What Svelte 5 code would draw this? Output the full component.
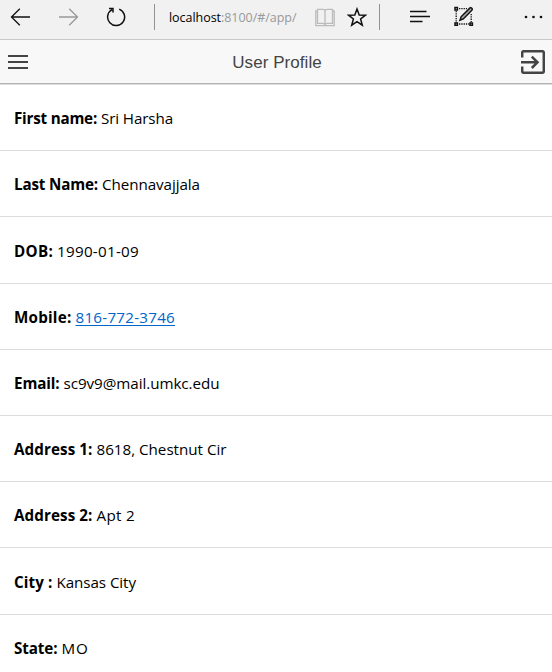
<script>
  const fields = [
    { label: 'First name:', labelWidth: 83, value: 'Sri Harsha', width: 72 },
    { label: 'Last Name:', labelWidth: 84, value: 'Chennavajjala', width: 98 },
    { label: 'DOB:', labelWidth: 39, value: '1990-01-09', width: 82 },
    { label: 'Mobile:', labelWidth: 57.5, value: '816-772-3746', width: 99.5, link: true },
    { label: 'Email:', labelWidth: 45.5, value: 'sc9v9@mail.umkc.edu', width: 156 },
    { label: 'Address 1:', labelWidth: 78.5, value: '8618, Chestnut Cir', width: 130 },
    { label: 'Address 2:', labelWidth: 78.5, value: 'Apt 2', width: 38.5 },
    { label: 'City :', labelWidth: 38.5, value: 'Kansas City', width: 79.5 },
    { label: 'State:', labelWidth: 43.5, value: 'MO', width: 27 }
  ];

  // Tracks the text so that it fills the given width.
  function fit(node, width) {
    const natural = node.getBoundingClientRect().width;
    node.style.letterSpacing = `${(width - natural) / node.textContent.length}px`;
  }
</script>

<div class="screen">
  <div class="browser">
    <svg class="back" width="20" height="20" viewBox="0 0 20 20"><path d="M1.5 10H20M9.8 1.7L1.5 10l8.3 8.3" /></svg>
    <svg class="forward" width="20" height="20" viewBox="0 0 20 20"><path d="M0 10h18.5M10.2 1.7l8.3 8.3-8.3 8.3" /></svg>
    <svg class="reload" width="20" height="20" viewBox="0 0 20 20"><path d="M13.2 2.1a8.5 8.5 0 1 1-7.2.5M3 1.5h4v4" /></svg>
    <i class="divider first"></i>
    <div class="url"><span class="host" use:fit={52}>localhost</span><span class="path" use:fit={75.5}>:8100/#/app/</span></div>
    <svg class="book" width="20" height="19" viewBox="0 0 20 19">
      <path d="M2.5 3H.8v14.7h18.4V3h-1.7" />
      <path d="M2.5 1.3h5.2Q10 1.3 10 3q0-1.7 2.3-1.7h5.2v14h-5.2Q10 15.3 10 17q0-1.7-2.3-1.7H2.5zM10 3v14" />
    </svg>
    <svg class="star" width="20" height="20" viewBox="0 0 20 20"><path d="M10 2l2.2 6 6.2.2-4.8 3.8 1.7 6.2L10 14.7l-5.3 3.5L6.4 12 1.6 8.2l6.2-.2z" /></svg>
    <i class="divider second"></i>
    <svg class="hub" width="20" height="13" viewBox="0 0 20 13"><path d="M0 1.5h16.5M0 6.5h20M0 11.5h12.5" /></svg>
    <svg class="note" width="20" height="20" viewBox="0 0 20 20">
      <path class="dots" d="M5 2.7h8M5 18h11M2.2 5v12M17.2 8v8" />
      <path d="M1 1.5h2.4v2.4H1zM1 16.9h2.4v2.4H1zM16 16.9h2.4v2.4H16z" />
      <path class="pen" d="M6 14.3l1.1-3.5L15.8 2.1q1-1 2 .1t0 2L9.3 12.9z" />
    </svg>
    <svg class="more" width="20" height="4" viewBox="0 0 20 4"><circle cx="3" cy="2" r="1.35" /><circle cx="10.5" cy="2" r="1.35" /><circle cx="18" cy="2" r="1.35" /></svg>
  </div>

  <header>
    <svg width="20" height="14" viewBox="0 0 20 14"><path d="M0 1h20M0 7h20M0 13h20" /></svg>
    <h1><span use:fit={89.5}>User Profile</span></h1>
    <svg class="exit" width="24" height="24" viewBox="0 0 24 24">
      <path d="M1.2 7.5V2.7q0-1.5 1.5-1.5h18.6q1.5 0 1.5 1.5v18.6q0 1.5-1.5 1.5H2.7q-1.5 0-1.5-1.5v-4.8M0 12.3h16.5M10.8 6.6l5.7 5.7-5.7 5.7" />
    </svg>
  </header>

  <main>
    {#each fields as field}
      <div class="row">
        <b use:fit={field.labelWidth}>{field.label}</b>
        {#if field.link}
          <a href="tel:{field.value}" use:fit={field.width}>{field.value}</a>
        {:else}
          <span use:fit={field.width}>{field.value}</span>
        {/if}
      </div>
    {/each}
  </main>
</div>

<style>
  :global(body) { margin: 0; background: #fff; overflow: hidden; }
  .screen { width: 552px; height: 672px; overflow: hidden; background: #fff; color: #000; font-family: "Open Sans", "Noto Sans", sans-serif; }
  svg { display: block; flex: none; fill: none; stroke: #111; stroke-width: 1.3; }
  .browser { box-sizing: border-box; height: 40px; display: flex; align-items: center; padding: 0 9px 5px 10px; background: #f1f1f1; border-bottom: 1px solid #c8c8c8; }
  .forward { margin-left: 29px; stroke: #999; }
  .reload { margin-left: 27px; stroke-width: 1.5; }
  .divider { flex: none; width: 1px; height: 26px; background: #929292; }
  .first { margin-left: 28px; }
  .url { width: 129px; margin-left: 14px; padding-top: 2px; white-space: nowrap; font-size: 12.5px; line-height: 20px; }
  .url span { display: inline-block; }
  .path { color: #999; }
  .book { margin-left: 17px; stroke: #bbb; }
  .star { margin-left: 12px; stroke-width: 1.5; }
  .second { margin-left: 12px; }
  .hub { margin: 0 0 2px 30px; stroke-width: 1.3; }
  .note { margin: 0 0 2px 24px; stroke-width: 1.5; }
  .note .dots { stroke-dasharray: 1.3 1; stroke-width: 1.3; }
  .note .pen { fill: #aaa; stroke-width: 1.5; }
  .more { margin-left: auto; fill: #111; stroke: none; }
  header { box-sizing: border-box; height: 45px; display: flex; align-items: center; padding: 0 7px 0 8px; background: #f8f8f8; border-bottom: 1px solid #dcdcdc; box-shadow: inset 0 -1px #b2b2b2; }
  header svg { stroke: #444; stroke-width: 2; }
  header .exit { stroke-width: 2.5; }
  h1 { flex: 1; margin: 0; padding: 2px 0 0 5px; text-align: center; font: 400 17px/42px "Liberation Sans", Arial, sans-serif; color: #444; }
  h1 span { display: inline-block; }
  main { margin-top: -0.1px; }
  .row { box-sizing: border-box; height: 66.21px; display: flex; gap: 4px; padding: 21.25px 14px 0; border-bottom: 1px solid #ddd; font-size: 15.2px; line-height: 24px; white-space: nowrap; }
  .row span, .row a, .row b { flex: none; }
  a { color: #0066cc; text-decoration: underline; text-underline-offset: 2px; text-decoration-thickness: 1px; text-decoration-skip-ink: none; }
</style>
